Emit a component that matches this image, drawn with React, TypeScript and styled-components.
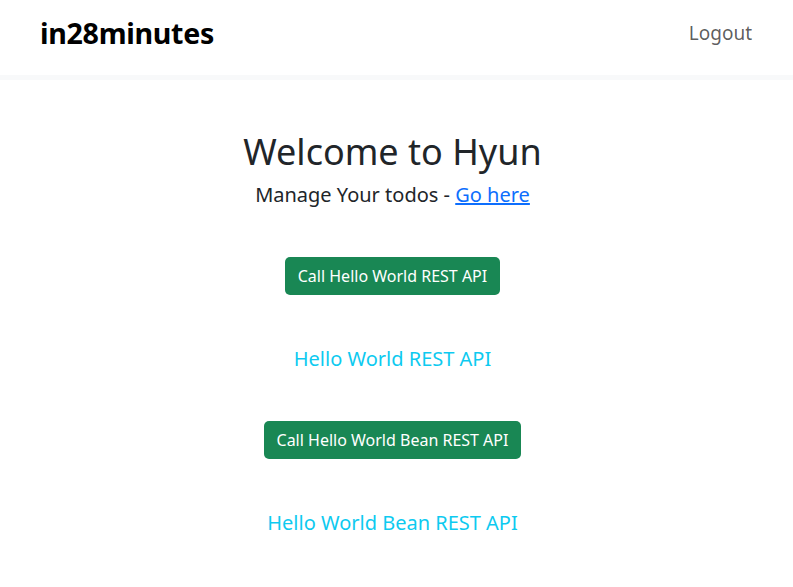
import React from "react";
import styled, { createGlobalStyle } from "styled-components";

const Global = createGlobalStyle`
  html, body { margin: 0; padding: 0; background: #fff; }
  body { font-family: "Noto Sans", "Open Sans", sans-serif; color: #212529; }
`;

const Header = styled.header`
  height: 80px;
  box-sizing: border-box;
  padding: 0 41px 10px 40px;
  border-bottom: 5px solid #f8f9fa;
  display: flex;
  align-items: center;
  justify-content: space-between;
`;

const Brand = styled.a`
  font-size: 28.6px;
  font-weight: 700;
  color: #000;
  text-decoration: none;
  letter-spacing: -0.3px;
`;

const NavLink = styled.a`
  font-size: 19px;
  color: rgba(0, 0, 0, 0.65);
  text-decoration: none;
`;

const Main = styled.main`
  display: flex;
  flex-direction: column;
  align-items: center;
  text-align: center;
  padding-right: 8px;
`;

const Title = styled.h1`
  margin: 48px 0 0;
  font-size: 36px;
  font-weight: 400;
  line-height: 48px;
`;

const Sub = styled.div`
  font-size: 20px;
  line-height: 28px;
  margin-top: 5px;
  a { color: #0d6efd; }
`;

const Button = styled.button<{ $top: number }>`
  margin-top: ${(p) => p.$top}px;
  background: #198754;
  color: #fff;
  border: none;
  border-radius: 5px;
  height: 38px;
  padding: 0 13px;
  font-family: inherit;
  font-size: 16px;
`;

const Info = styled.div<{ $top: number }>`
  margin-top: ${(p) => p.$top}px;
  color: #0dcaf0;
  font-size: 20px;
  line-height: 28px;
`;

export default function App() {
  return (
    <>
      <Global />
      <Header>
        <Brand href="#">in28minutes</Brand>
        <NavLink href="#">Logout</NavLink>
      </Header>
      <Main>
        <Title>Welcome to Hyun</Title>
        <Sub>
          Manage Your todos - <a href="#">Go here</a>
        </Sub>
        <Button $top={48}>Call Hello World REST API</Button>
        <Info $top={50}>Hello World REST API</Info>
        <Button $top={48}>Call Hello World Bean REST API</Button>
        <Info $top={50}>Hello World Bean REST API</Info>
      </Main>
    </>
  );
}
